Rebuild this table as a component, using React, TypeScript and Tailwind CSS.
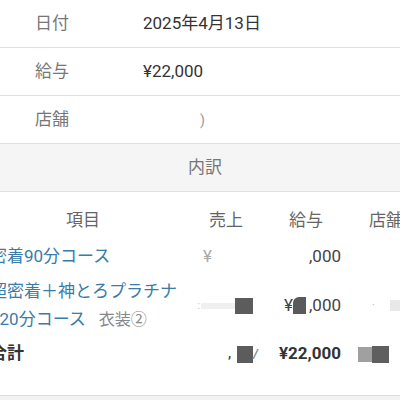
import React from "react";

const InfoRow: React.FC<{ label: string; children: React.ReactNode }> = ({ label, children }) => (
    <div className="flex items-center h-[48px] border-b border-[#e0e0e0]">
        <span className="w-[143px] pl-[35px] text-[#777]">{label}</span>
        <span className="text-[#333]">{children}</span>
    </div>
);

const Block: React.FC<{ className: string }> = ({ className }) => (
    <span className={`inline-block ${className}`} />
);

export default function App() {
    return (
        <div className="w-[400px] h-[400px] overflow-hidden bg-[#f2f2f4] font-['Roboto','Noto_Sans_CJK_JP',sans-serif] text-[17px]">
            <div className="bg-white">
                <InfoRow label="日付">2025年4月13日</InfoRow>
                <InfoRow label="給与">¥22,000</InfoRow>
                <InfoRow label="店舗">
                    <span className="pl-[57px] text-[#999] text-[14px]">)</span>
                </InfoRow>
                <div className="flex items-center justify-center h-[48px] pl-[10px] bg-[#f5f5f5] border-b border-[#e0e0e0] text-[#777]">
                    内訳
                </div>

                <div className="overflow-hidden h-[204px] border-b border-[#dcdce2]">
                    <div className="-ml-[20px] pt-[9px] grid grid-cols-[206px_80px_80px_80px] w-[446px]">
                        {/* header */}
                        <div className="h-[40px] flex items-center justify-center text-[#666]">項目</div>
                        <div className="h-[40px] flex items-center justify-center text-[#666]">売上</div>
                        <div className="h-[40px] flex items-center justify-center text-[#666]">給与</div>
                        <div className="h-[40px] flex items-center justify-center text-[#666]">店舗</div>

                        {/* row 1 */}
                        <div className="h-[32px] flex items-center pl-[10px] text-[#3a7ca8] whitespace-nowrap">密着90分コース</div>
                        <div className="h-[32px] flex items-center justify-end pr-[3px] text-[#444]">
                            <span className="text-[#aaa]">¥</span>
                            <span className="text-transparent">22,000</span>
                        </div>
                        <div className="h-[32px] flex items-center justify-end pr-[5px] text-[#444]">
                            <span className="text-transparent">¥22</span>,000
                        </div>
                        <div className="h-[32px]" />

                        {/* row 2 */}
                        <div className="py-[4px] pl-[10px] leading-[28px] text-[#3a7ca8] whitespace-nowrap">
                            超密着＋神とろプラチナ
                            <br />
                            120分コース
                            <span className="ml-[13px] text-[16px] text-[#888]">衣装②</span>
                        </div>
                        <div className="flex items-center justify-end pr-[13px]">
                            <span className="text-[10px] text-[#bbb] mr-[1px]">:</span>
                            <Block className="w-[34px] h-[6px] bg-[#f0f0f0]" />
                            <Block className="w-[18px] h-[16px] bg-[#5c5c5c]" />
                        </div>
                        <div className="flex items-center justify-end pr-[5px] text-[#444]">
                            ¥
                            <Block className="w-[13px] h-[17px] bg-[#5a5a5a] mr-[3px] rounded-tl-[6px]" />
                            ,000
                        </div>
                        <div className="flex items-center pl-[26px]">
                            <span className="text-[10px] text-[#aaa]">·</span>
                            <Block className="ml-[15px] w-[20px] h-[11px] bg-[#e8e8e8]" />
                        </div>

                        {/* row 3 */}
                        <div className="h-[32px] flex items-center pl-[10px] font-bold text-[#333]">合計</div>
                        <div className="h-[32px] flex items-center justify-end pr-[8px] text-[#444] font-bold">
                            <span className="text-[13px]">,</span>
                            <Block className="ml-[6px] w-[16px] h-[17px] bg-[#5c5c5c]" />
                            <span className="text-[13px] text-[#888] italic">/</span>
                        </div>
                        <div className="h-[32px] flex items-center justify-end pr-[5px] font-bold text-[#333]">¥22,000</div>
                        <div className="h-[32px] flex items-center pl-[12px]">
                            <Block className="w-[14px] h-[15px] bg-[#a0a0a0]" />
                            <Block className="w-[17px] h-[17px] bg-[#5f5f5f]" />
                        </div>
                    </div>
                </div>
            </div>
        </div>
    );
}
